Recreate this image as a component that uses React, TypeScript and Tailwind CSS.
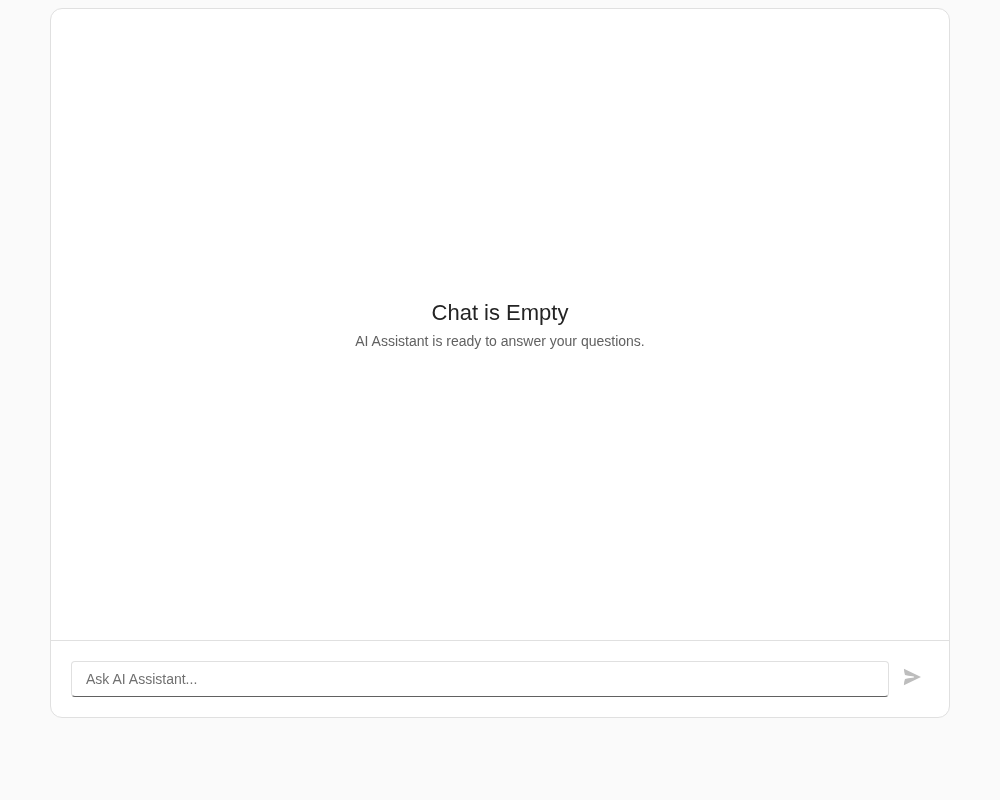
export default function App() {
  return (
    <div className="min-h-screen bg-[#fafafa] px-12.5 py-2 font-['Liberation_Sans',Arial,sans-serif] antialiased">
      <main className="mx-auto flex h-[710px] max-w-[900px] flex-col overflow-hidden rounded-xl border border-[#e0e0e0] bg-white">
        <section className="flex flex-1 flex-col items-center justify-center gap-1 text-center will-change-transform">
          <h1 className="text-[22px] leading-7 text-[#242424]">Chat is Empty</h1>
          <p className="text-sm leading-5 text-[#616161]">AI Assistant is ready to answer your questions.</p>
        </section>
        <form className="flex items-start gap-2 border-t border-[#e0e0e0] p-5 will-change-transform" onSubmit={(e) => e.preventDefault()}>
          <input
            type="text"
            aria-label="Message"
            placeholder="Ask AI Assistant..."
            className="h-9 min-w-0 flex-1 rounded border border-[#e0e0e0] border-b-[#616161] bg-white px-3.5 text-sm text-[#242424] outline-none placeholder:text-[#707070]"
          />
          <button type="submit" disabled aria-label="Send" className="flex h-8 w-8 items-center justify-center text-[#bdbdbd]">
            <svg viewBox="0 0 20 20" className="size-5" fill="currentColor" aria-hidden="true">
              <path d="M.9 1.8L18 10L.9 18.2Q1.1 14.2 2 12Q5 11.2 9.5 10.8Q11.2 10.5 11.2 10Q11.2 9.5 9.5 9.2Q5 8.8 2 8Q1.1 5.8 .9 1.8Z" />
            </svg>
          </button>
        </form>
      </main>
    </div>
  );
}
